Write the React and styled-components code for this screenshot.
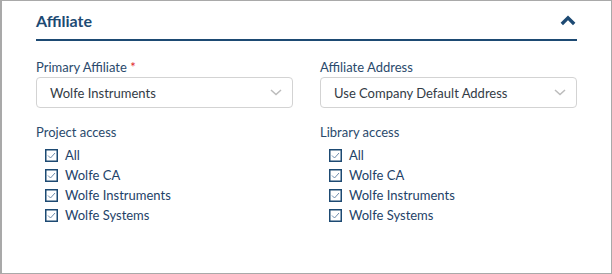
import React from 'react';
import styled, { createGlobalStyle } from 'styled-components';

const GlobalStyle = createGlobalStyle`
    body {
        margin: 0;
        font-family: Lato, "Open Sans", sans-serif;
        background: #fff;
    }
`;

function ChevronUp() {
    return (
        <svg width="16" height="11" viewBox="0 0 16 11">
            <path d="M1.8 9 L8 2.8 L14.2 9" fill="none" stroke="#1d4a73" strokeWidth="3.4" />
        </svg>
    );
}

function ChevronDown() {
    return (
        <svg width="12" height="7" viewBox="0 0 12 7">
            <path d="M1 1 L6 5.5 L11 1" fill="none" stroke="#bcbcbc" strokeWidth="1.5" />
        </svg>
    );
}

function Check() {
    return (
        <CheckBox>
            <svg width="9" height="7" viewBox="0 0 9 7">
                <path d="M1 3.5 L3.5 6 L8 1" fill="none" stroke="#5f80a4" strokeWidth="0.9" />
            </svg>
        </CheckBox>
    );
}

function Select({ value }) {
    return (
        <SelectBox>
            <span>{value}</span>
            <ChevronDown />
        </SelectBox>
    );
}

function AccessList({ title, items }) {
    return (
        <Field>
            <Label>{title}</Label>
            <List>
                {items.map((item) => (
                    <Row key={item}>
                        <Check />
                        <span>{item}</span>
                    </Row>
                ))}
            </List>
        </Field>
    );
}

const companies = ['All', 'Wolfe CA', 'Wolfe Instruments', 'Wolfe Systems'];

export default function App() {
    return (
        <>
            <GlobalStyle />
            <Panel>
                <Header>
                    <Title>Affiliate</Title>
                    <ChevronUp />
                </Header>
                <Grid>
                    <Field>
                        <Label>Primary Affiliate <Required>*</Required></Label>
                        <Select value="Wolfe Instruments" />
                    </Field>
                    <Field>
                        <Label>Affiliate Address</Label>
                        <Select value="Use Company Default Address" />
                    </Field>
                    <AccessList title="Project access" items={companies} />
                    <AccessList title="Library access" items={companies} />
                </Grid>
            </Panel>
        </>
    );
}

const Panel = styled.section`
    box-sizing: border-box;
    width: 612px;
    height: 274px;
    border: 1px solid #a9a9a9;
    border-left-width: 2px;
    padding: 0 34px;
`;

const Header = styled.div`
    display: flex;
    justify-content: space-between;
    align-items: center;
    height: 38px;
    border-bottom: 2px solid #1d4a73;
    padding-right: 1px;
`;

const Title = styled.h2`
    margin: 0;
    font-size: 16px;
    font-weight: 700;
    color: #1d4a73;
`;

const Grid = styled.div`
    display: grid;
    grid-template-columns: 257px 257px;
    column-gap: 27px;
    row-gap: 16px;
    padding-top: 18px;
`;

const Field = styled.div`
    display: flex;
    flex-direction: column;
`;

const Label = styled.div`
    font-size: 13px;
    line-height: 17px;
    color: #2a4a6c;
    margin-bottom: 1px;
`;

const Required = styled.span`
    color: #e0262b;
`;

const SelectBox = styled.div`
    box-sizing: border-box;
    height: 31px;
    display: flex;
    align-items: center;
    justify-content: space-between;
    padding: 0 10px 0 13px;
    border: 1px solid #d3d3d3;
    border-radius: 4px;
    font-size: 13px;
    color: #333b45;
`;

const List = styled.div`
    display: flex;
    flex-direction: column;
    padding: 3px 0 0 9px;
`;

const Row = styled.div`
    display: flex;
    align-items: center;
    gap: 7px;
    height: 20px;
    font-size: 13px;
    line-height: 20px;
    color: #1e4268;
`;

const CheckBox = styled.span`
    box-sizing: border-box;
    flex: none;
    align-self: flex-start;
    margin-top: 4px;
    width: 13px;
    height: 13px;
    border: 1px solid #1d4a73;
    box-shadow: inset 0 0 0 0.5px #1d4a73;
    display: flex;
    align-items: center;
    justify-content: center;
`;
